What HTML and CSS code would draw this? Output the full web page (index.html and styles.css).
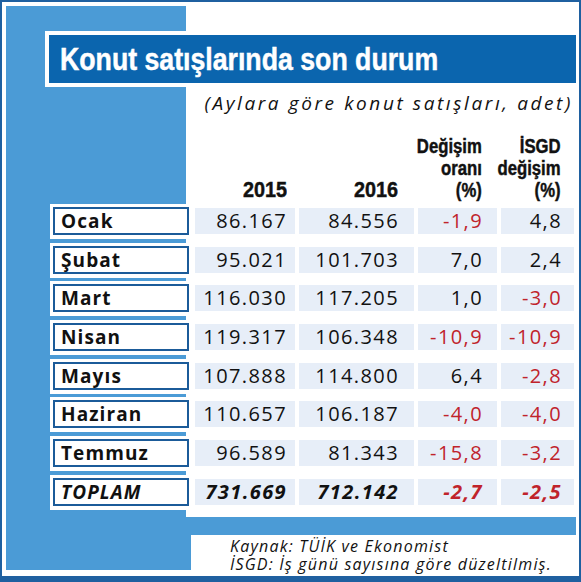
FILE: index.html
```html
<!DOCTYPE html>
<html lang="tr">
<head>
<meta charset="utf-8">
<title>Konut satışlarında son durum</title>
<link rel="stylesheet" href="styles.css">
</head>
<body>
<div class="frame">
  <div class="content">
    <div class="top">
      <div class="title"><h1><span>Konut satışlarında son durum</span></h1></div>
      <p class="subtitle">(Aylara göre konut satışları, adet)</p>
      <div class="grid head">
        <div></div>
        <div class="h c1"><span class="yr">2015</span></div>
        <div class="h c2"><span class="yr">2016</span></div>
        <div class="h c3"><span>Değişim<br>oranı<br>(%)</span></div>
        <div class="h c4"><span>İSGD<br>değişim<br>(%)</span></div>
      </div>
      <div class="grid table">
        <div class="lab"><span>Ocak</span></div><div class="v c1">86.167</div><div class="v c2">84.556</div><div class="v c3 neg">-1,9</div><div class="v c4">4,8</div>
        <div class="lab"><span>Şubat</span></div><div class="v c1">95.021</div><div class="v c2">101.703</div><div class="v c3">7,0</div><div class="v c4">2,4</div>
        <div class="lab"><span>Mart</span></div><div class="v c1">116.030</div><div class="v c2">117.205</div><div class="v c3">1,0</div><div class="v c4 neg">-3,0</div>
        <div class="lab"><span>Nisan</span></div><div class="v c1">119.317</div><div class="v c2">106.348</div><div class="v c3 neg">-10,9</div><div class="v c4 neg">-10,9</div>
        <div class="lab"><span>Mayıs</span></div><div class="v c1">107.888</div><div class="v c2">114.800</div><div class="v c3">6,4</div><div class="v c4 neg">-2,8</div>
        <div class="lab"><span>Haziran</span></div><div class="v c1">110.657</div><div class="v c2">106.187</div><div class="v c3 neg">-4,0</div><div class="v c4 neg">-4,0</div>
        <div class="lab"><span>Temmuz</span></div><div class="v c1">96.589</div><div class="v c2">81.343</div><div class="v c3 neg">-15,8</div><div class="v c4 neg">-3,2</div>
        <div class="lab total"><span>TOPLAM</span></div><div class="v c1 total">731.669</div><div class="v c2 total">712.142</div><div class="v c3 neg total">-2,7</div><div class="v c4 neg total">-2,5</div>
      </div>
    </div>
    <div class="band"></div>
    <div class="foot">
      <p>Kaynak: TÜİK ve Ekonomist<br>İSGD: İş günü sayısına göre düzeltilmiş.</p>
    </div>
  </div>
</div>
</body>
</html>
```

FILE: styles.css
```css
html, body {
  margin: 0;
  padding: 0;
  background: #fff;
}

.frame {
  width: 581px;
  height: 582px;
  box-sizing: border-box;
  border: solid #1f60a0;
  border-width: 2px 2px 6px 2px;
  padding: 4px 3px 0 4px;
  background: #fff;
  font-family: "Open Sans", "Noto Sans", sans-serif;
  color: #111;
}

.content {
  width: 570px;
  height: 570px;
}

.top {
  height: 511px;
  box-sizing: border-box;
  padding-top: 25px;
  background: linear-gradient(to right, #4b9bd6 180px, #fff 180px);
}

.title {
  margin-left: 39px;
  border: 4px solid #fff;
  border-right: 0;
  background: #0b65ae;
  height: 48px;
  overflow: hidden;
}

.title h1 {
  margin: 0;
  padding-left: 11px;
  color: #fff;
  font-family: "Liberation Sans", Arial, sans-serif;
  font-weight: bold;
  font-size: 32px;
  line-height: 48px;
  white-space: nowrap;
  -webkit-text-stroke: 0.5px #fff;
}

.title h1 span {
  display: inline-block;
  transform: scaleX(0.834);
  transform-origin: left center;
}

.subtitle {
  margin: 4px 0 0;
  padding-right: 3px;
  text-align: right;
  font-style: italic;
  font-size: 19px;
  line-height: 24px;
  letter-spacing: 2.6px;
  white-space: nowrap;
}

.grid {
  display: grid;
  grid-template-columns: 141px 100px 115px 79px 73px;
  column-gap: 4px;
  margin-left: 44px;
}

.head {
  margin-top: 20px;
  height: 66px;
  margin-bottom: 3px;
}

.h {
  display: flex;
  justify-content: flex-end;
  align-items: flex-end;
  font-family: "Liberation Sans", Arial, sans-serif;
  font-weight: bold;
  font-size: 20px;
  line-height: 22px;
  -webkit-text-stroke: 0.45px #111;
}

.h span {
  display: inline-block;
  flex-shrink: 0;
  text-align: right;
  white-space: nowrap;
  transform: scaleX(0.835);
  transform-origin: right bottom;
}

.h span.yr {
  font-size: 22px;
  transform: scaleX(0.9);
}

.table {
  grid-template-rows: 39px 38px 39px 39px 38px 39px 39px 38px;
}

.lab {
  height: 35px;
  box-sizing: border-box;
  padding: 3px 2px 4px 3px;
  background: #fff;
}

.lab span {
  display: block;
  height: 28px;
  box-sizing: border-box;
  border: 2px solid #1b5b99;
  padding-left: 6px;
  font-weight: bold;
  font-size: 19px;
  line-height: 24px;
  letter-spacing: 1.1px;
}

.lab.total span {
  font-style: italic;
}

.v {
  margin-top: 4px;
  height: 26px;
  background: #e7eef8;
  text-align: right;
  font-size: 20px;
  line-height: 26px;
  letter-spacing: 1.4px;
}

.v.total {
  font-weight: bold;
  font-style: italic;
}

.v.c1 { padding-right: 8px; }
.v.c2 { padding-right: 15px; }
.v.c3 { padding-right: 14px; }
.v.c4 { padding-right: 12px; }

.h.c1 { padding-right: 8px; }
.h.c2 { padding-right: 16px; }
.h.c3 { padding-right: 15px; }
.h.c4 { padding-right: 13px; }

.neg { color: #c0232b; }

.band {
  height: 18px;
  background: #4b9bd6;
}

.foot {
  height: 41px;
  box-sizing: border-box;
  padding: 2px 0 0 224px;
  background: linear-gradient(to right, #4b9bd6 185px, #fff 185px) top left / 100% 35px no-repeat, #fff;
}

.foot p {
  margin: 0;
  font-style: italic;
  font-size: 16px;
  line-height: 18px;
  letter-spacing: 1.2px;
  white-space: nowrap;
}
```
